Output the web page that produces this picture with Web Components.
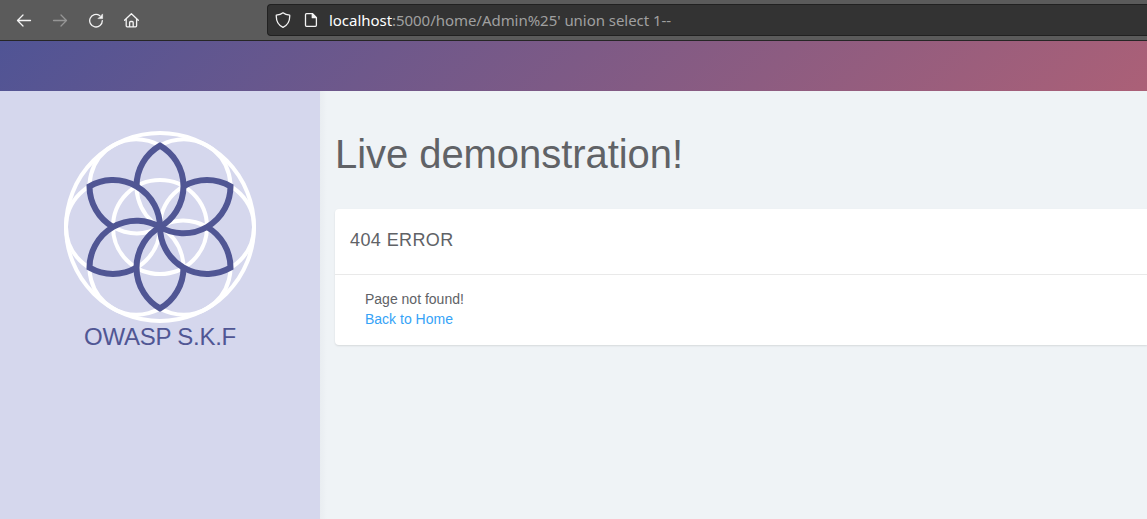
<!DOCTYPE html>
<html lang="en"><head><meta charset="utf-8"><title>Live demonstration</title>
<style>html,body{margin:0;height:100%;overflow:hidden}body{font:14px/20px "Liberation Sans",Arial,sans-serif;color:#606266}</style></head>
<body><skf-app></skf-app>
<script>
const define=(name,html,after)=>customElements.define(name,class extends HTMLElement{
  constructor(){super();this.attachShadow({mode:'open'}).innerHTML=html;if(after)after(this.shadowRoot)}
});
define('browser-bar',`<style>
:host{display:flex;box-sizing:border-box;height:41px;background:#5b5b5b;border-bottom:1px solid #262626;padding:4px 0 4px 16px;color:#f4f4f4}
nav{display:flex;gap:20px;width:251px;padding-top:8px;flex:none}svg{display:block;fill:none;stroke:currentColor;stroke-width:1.3;stroke-linecap:round;stroke-linejoin:round;flex:none}
.off{color:#969696}
.url{box-sizing:border-box;height:32px;flex:1;display:flex;align-items:center;background:#333;border:1px solid #212121;border-right:0;border-radius:4px 0 0 4px;padding-left:7px;gap:12px}
.text{font:15px/20px "Noto Sans",sans-serif;color:#a0a0a0;white-space:pre;letter-spacing:-.04px;margin-left:-2px}.text b{font-weight:400;color:#fff}
</style><nav>
<svg width="16" height="16" viewBox="0 0 16 16"><path d="M14.5 8.5H1.5M7 3L1.5 8.5L7 14"/></svg>
<svg class="off" width="16" height="16" viewBox="0 0 16 16"><path d="M1.5 8.5h13M9 3l5.5 5.5L9 14"/></svg>
<svg width="16" height="16" viewBox="0 0 16 16"><path d="M11.6 3.5A6.3 6.3 0 1 0 14.3 8.6"/><path d="M14.6 2.3v4.3H10.3z" fill="currentColor" stroke-width=".6"/></svg>
<svg width="16" height="16" viewBox="0.6 0 16 16"><path d="M1.1 8.2L8 1.7L14.9 8.2M2.8 7v6.8q0 1 1 1h8.4q1 0 1-1V7M6.2 14.5V10.5q0-1 1-1h1.6q1 0 1 1v4"/></svg></nav>
<div class="url"><svg width="16" height="16" viewBox="0 0 16 16"><path d="M8 .8Q10.5 2.8 14.7 3.1C15 8.5 13 13 8 15.3C3 13 1 8.5 1.3 3.1Q5.5 2.8 8 .8z"/></svg>
<svg width="16" height="16" viewBox="0 0 16 16"><path d="M3.5 1.7h6l3.9 3.9v7.7q0 1-1 1H3.5q-1 0-1-1V2.7q0-1 1-1z"/><path d="M9.3 1.7v4h4z" fill="currentColor"/></svg>
<span class="text"><b>localhost</b>:5000/home/Admin%25' union select 1--</span></div>`);
define('page-header',`<style>:host{display:block;height:50px;background:linear-gradient(135deg,#505495,#ab6077)}</style>`);
define('flower-logo',`<style>:host{display:block;height:192px}svg{display:block;margin:auto}</style>
<svg width="192" height="192" viewBox="-96 -96 192 192" fill="none"><g stroke="#fff" stroke-width="4"><circle r="94"/><circle r="47"/><g id="rings"></g></g><g id="petals" stroke="#505694" stroke-width="6"></g></svg>`,root=>{
 const turns=[0,60,120,180,240,300];
 root.querySelector('#rings').innerHTML=turns.map(a=>`<circle cx="47" r="47" transform="rotate(${a})"/>`).join('');
 root.querySelector('#petals').innerHTML=turns.map(a=>`<path transform="rotate(${a})" d="M-23.5-40.7A47 47 0 0 1 0-81.4A47 47 0 0 1 0 0"/>`).join('');
});
define('side-bar',`<style>:host{display:block;box-sizing:border-box;width:320px;flex:none;background:#d5d7ed;padding-top:40px;text-align:center}
div{font-size:24px;line-height:28px;color:#505694;letter-spacing:-.25px}</style><flower-logo></flower-logo><div>OWASP S.K.F</div>`);
define('info-card',`<style>:host{display:block;box-sizing:border-box;height:136px;background:#fff;border-radius:4px 0 0 4px;box-shadow:0 1px 2px #0000001c}
header{box-sizing:border-box;height:66px;border-bottom:1px solid #e9e9e9;padding:21px 15px;font-size:18px;line-height:20px}
section{padding:14px 30px}</style><header><slot name="title"></slot></header><section><slot></slot></section>`);
define('main-view',`<style>:host{display:block;flex:1;background:linear-gradient(90deg,#e9edf1,#eff3f6 7px);padding:40px 0 0 15px}
h1{font-size:40px;line-height:46px;font-weight:400;letter-spacing:-.06px;margin:0 0 32px;white-space:nowrap}
a{color:#36a3f7;text-decoration:none}.title{letter-spacing:.4px}</style><h1>Live demonstration!</h1>
<info-card><span class="title" slot="title">404 ERROR</span><div><span class="msg">Page not found!</span></div><div><a href="#">Back to Home</a></div></info-card>`);
define('skf-app',`<style>:host{display:flex;flex-direction:column;height:100vh}main{display:flex;flex:1}</style>
<browser-bar></browser-bar><page-header></page-header><main><side-bar></side-bar><main-view></main-view></main>`);
</script></body></html>
